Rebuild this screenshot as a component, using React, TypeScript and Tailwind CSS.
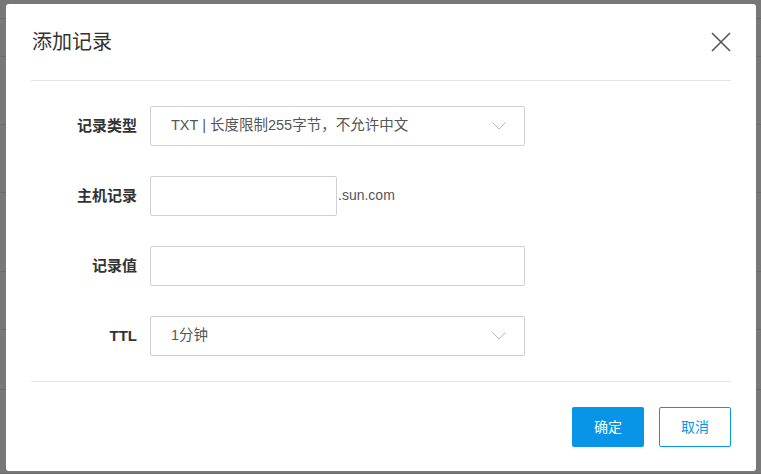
import { useState } from "react";

const rows = [19, 38, 68, 68, 79, 58, 60, 84];

export default function App() {
  const [host, setHost] = useState("");
  const [value, setValue] = useState("");

  return (
    <div
      className="relative w-[761px] h-[474px] overflow-hidden bg-[#787878]"
      style={{ fontFamily: '"Liberation Sans", "Noto Sans CJK SC", sans-serif' }}
    >
      {/* page behind the overlay */}
      <div className="flex flex-col">
        {rows.map((h, i) => (
          <div key={i} className="border-b border-[#6c6c6c]" style={{ height: h }} />
        ))}
      </div>

      {/* dialog */}
      <div className="absolute left-[6px] top-[4px] w-[750px] h-[467px] bg-white rounded-[3px] px-[25px] flex flex-col">
        <div className="h-[77px] flex items-center justify-between border-b border-[#e6e6e6]">
          <h2 className="text-[20px] text-[#333] leading-7 pl-px">添加记录</h2>
          <button className="w-5 h-5 text-[#555]">
            <svg viewBox="0 0 20 20" className="w-5 h-5" fill="none" stroke="currentColor" strokeWidth={1.6}>
              <path d="M1 1l18 18M19 1L1 19" />
            </svg>
          </button>
        </div>

        <div className="flex flex-col gap-[30px] pt-[25px] pb-[25px] border-b border-[#e6e6e6]">
          <FormRow label="记录类型">
            <Select text="TXT | 长度限制255字节，不允许中文" />
          </FormRow>
          <FormRow label="主机记录">
            <div className="flex items-center">
              <input
                value={host}
                onChange={(e) => setHost(e.target.value)}
                className="w-[187px] h-[40px] border border-[#d0d0d0] rounded-[2px] px-3 text-sm outline-none"
              />
              <span className="text-sm text-[#555] pl-px -mt-[2px]">.sun.com</span>
            </div>
          </FormRow>
          <FormRow label="记录值">
            <input
              value={value}
              onChange={(e) => setValue(e.target.value)}
              className="w-[375px] h-[40px] border border-[#d0d0d0] rounded-[2px] px-3 text-sm outline-none"
            />
          </FormRow>
          <FormRow label="TTL">
            <Select text="1分钟" />
          </FormRow>
        </div>

        <div className="flex justify-end gap-[15px] pt-[25px]">
          <button className="w-[72px] h-[40px] rounded-[2px] bg-[#0895e8] text-white text-sm">确定</button>
          <button className="w-[72px] h-[40px] rounded-[2px] border border-[#0895e8] text-[#0895e8] text-sm">取消</button>
        </div>
      </div>
    </div>
  );
}

function FormRow({ label, children }: { label: string; children: React.ReactNode }) {
  return (
    <div className="flex items-center gap-[13px]">
      <label className="w-[106px] text-right text-[15px] font-bold text-[#333]">{label}</label>
      {children}
    </div>
  );
}

function Select({ text }: { text: string }) {
  return (
    <div className="w-[375px] h-[40px] border border-[#d0d0d0] rounded-[2px] flex items-center justify-between pl-5 pr-[18px]">
      <span className="text-[14.5px] text-[#555]">{text}</span>
      <svg viewBox="0 0 14 8" className="w-[14px] h-[8px]" fill="none" stroke="#b8b8b8" strokeWidth={1}>
        <path d="M0.5 0.5L7 7l6.5-6.5" />
      </svg>
    </div>
  );
}
